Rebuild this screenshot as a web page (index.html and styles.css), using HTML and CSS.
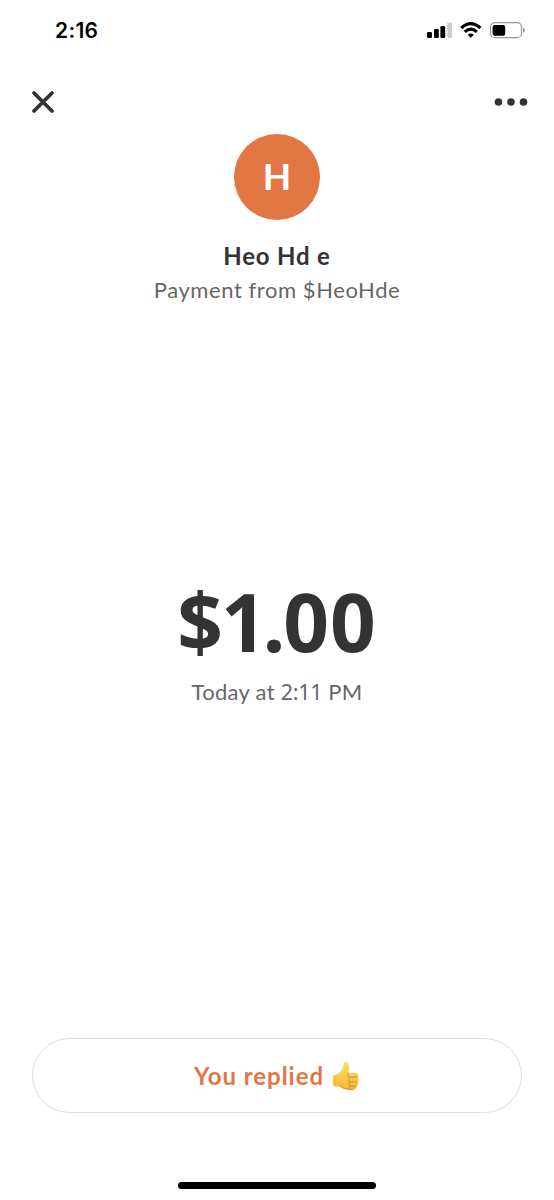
FILE: index.html
```html
<!DOCTYPE html>
<html lang="en">
<head>
    <meta charset="UTF-8">
    <title>Payment</title>
    <link rel="stylesheet" href="styles.css">
</head>
<body>
    <!-- Status bar -->
    <div class="status">
        <span class="time">2:16</span>
        <svg width="100" height="20" viewBox="0 0 100 20">
            <rect x="2" y="12" width="5" height="6" rx="1.2"/>
            <rect x="9" y="9" width="4.8" height="9" rx="1.2"/>
            <rect x="15.4" y="6" width="4.8" height="12" rx="1.2"/>
            <rect x="22.2" y="2.5" width="4.8" height="15.5" rx="1.2" fill="#ccc"/>
            <g fill="none" stroke="#000" stroke-width="3.1">
                <path d="M36.2 8Q45.8-.8 55.4 8"/>
                <path d="M39.8 11.9Q45.8 6.3 51.8 11.9"/>
            </g>
            <path d="M42.8 14.8Q45.8 12.3 48.8 14.8L45.8 17.9Z"/>
            <rect x="65.5" y="2.7" width="31" height="15" rx="4.5" fill="none" stroke="#999" stroke-width="1.2"/>
            <rect x="67.6" y="4.9" width="12.6" height="10.8" rx="2"/>
            <path d="M98 7.6Q100 8.3 100 10.2T98 12.8Z" fill="#999"/>
        </svg>
    </div>

    <!-- Close and more buttons -->
    <div class="toolbar">
        <svg width="24" height="24" viewBox="0 0 24 24">
            <path d="M3 3L21 21M21 3L3 21" stroke="#333" stroke-width="3.8" stroke-linecap="round"/>
        </svg>
        <svg width="34" height="8" viewBox="0 0 34 8" fill="#333">
            <circle cx="4.5" cy="4" r="3.8"/>
            <circle cx="17" cy="4" r="3.8"/>
            <circle cx="29.5" cy="4" r="3.8"/>
        </svg>
    </div>

    <div class="sender">
        <div class="avatar">H</div>
        <h1 class="name">Heo Hd e</h1>
        <p class="detail">Payment from $HeoHde</p>
    </div>

    <div class="payment">
        <div class="amount"><span class="sign">$</span><span class="one">1</span><span class="dot">.</span>00</div>
        <p class="date">Today at <span class="hour">2:11</span> PM</p>
    </div>

    <div class="reply">
        <span class="reply-text">You replied</span>
        <svg width="28" height="30" viewBox="0 0 28 30">
            <defs>
                <linearGradient id="skin" x1="0" y1="0" x2="0" y2="1">
                    <stop offset="0" stop-color="#ffdc5c"/>
                    <stop offset="1" stop-color="#f2b93b"/>
                </linearGradient>
            </defs>
            <path d="M1 14.5Q6 13.8 9.5 9.5Q11.5 7 11.3 3.5Q11.3 1 13.3 1Q16.3 1 17 5Q17.3 8 16 12H24Q26.5 12.3 26.5 14.5Q26.5 16 25.5 16.6Q27.2 17.5 26.8 19.3Q26.5 20.7 25.4 21.1Q26.5 22.2 26 23.8Q25.5 25 24.3 25.3Q25 28.5 21.5 28.6Q13 29 8.5 25.7Q5 25.8 1.4 25Q.3 20 1 14.5Z" fill="url(#skin)"/>
            <g fill="none" stroke="#cf922b" stroke-width="1" stroke-linecap="round">
                <path d="M16 12Q14.8 14.3 16.8 16.2H25M17.5 16.3Q15.3 18.8 17.5 20.9H25M17.7 21Q15.8 23 17.8 25.2H24M17.8 25.3Q17 27 18.5 28.3"/>
                <path d="M8.5 25.7Q13 28.9 21.5 28.6"/>
            </g>
        </svg>
    </div>

    <div class="home-bar"></div>
</body>
</html>
```

FILE: styles.css
```css
body {
    display: flex;
    flex-direction: column;
    box-sizing: border-box;
    height: 1200px;
    margin: 0;
    background-color: #fff;
    color: #333;
    font-family: Lato, sans-serif;
}

h1, p {
    margin: 0;
}

svg {
    display: block;
}

/* Status bar */
.status {
    display: flex;
    justify-content: space-between;
    align-items: center;
    height: 20px;
    padding: 20px 29px 0 55px;
}

.time {
    padding-top: 2px;
    color: #000;
    font-family: Inter, sans-serif;
    font-size: 21px;
    font-weight: 600;
    line-height: 22px;
    letter-spacing: 0.3px;
}

/* Top buttons */
.toolbar {
    display: flex;
    justify-content: space-between;
    align-items: center;
    height: 24px;
    padding: 50px 26px 0 31px;
}

/* Sender info */
.sender {
    display: flex;
    flex-direction: column;
    align-items: center;
    padding-top: 20px;
}

.avatar {
    width: 86px;
    height: 86px;
    border-radius: 50%;
    background-color: #e27645;
    color: #fff;
    font-size: 37px;
    font-weight: 700;
    line-height: 83px;
    text-align: center;
}

.name {
    margin-top: 20px;
    font-size: 24px;
    font-weight: 700;
    line-height: 32px;
    letter-spacing: 0.8px;
}

.detail, .date {
    color: #666;
    font-size: 22px;
    line-height: 30px;
    letter-spacing: 0.57px;
}

.detail {
    margin-top: 3px;
}

/* Amount and date */
.payment {
    display: flex;
    flex-direction: column;
    align-items: center;
    margin-top: 268px;
}

.amount {
    font-family: "Noto Sans", sans-serif;
    font-size: 80px;
    font-weight: 700;
    line-height: 96px;
    letter-spacing: 1px;
}

.sign {
    letter-spacing: -2px;
}

.one {
    letter-spacing: -4px;
}

.dot {
    letter-spacing: -2px;
}

.date {
    margin-top: 8px;
    letter-spacing: 0.3px;
}

.hour {
    font-family: "Noto Sans", sans-serif;
    font-size: 21.5px;
    letter-spacing: -0.3px;
}

/* Reply button */
.reply {
    display: flex;
    justify-content: center;
    align-items: center;
    gap: 8px;
    box-sizing: border-box;
    height: 75px;
    margin: auto 32px 0;
    border: 1px solid #ddd;
    border-radius: 38px;
}

.reply-text {
    color: #e27645;
    font-size: 24px;
    font-weight: 700;
    line-height: 32px;
    letter-spacing: 0.95px;
}

/* Home indicator */
.home-bar {
    width: 198px;
    height: 7px;
    margin: 69px auto 11px;
    border-radius: 4px;
    background-color: #000;
}
```
